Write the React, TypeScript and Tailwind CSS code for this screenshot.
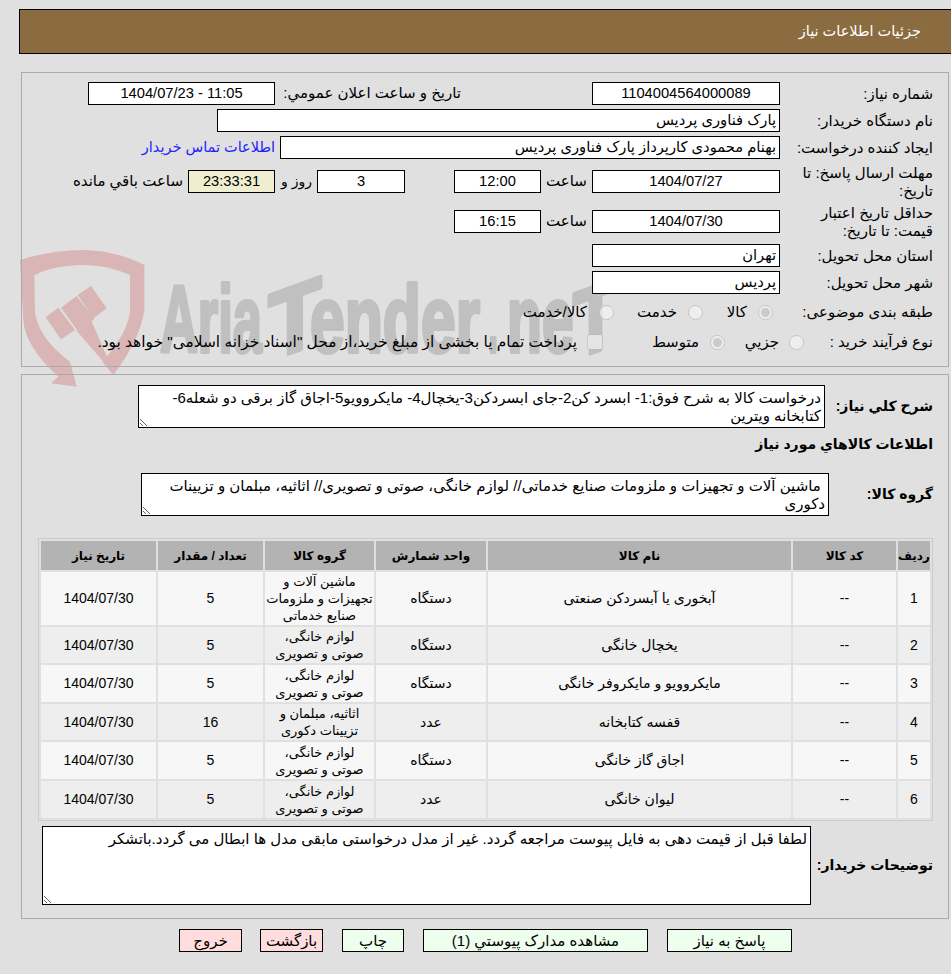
import React from 'react';

const inputBox = 'h-[23px] border border-black bg-white text-[14.7px] leading-[21px] px-[3px] overflow-hidden whitespace-nowrap';
const areaBox = 'h-[43px] border border-black bg-white resize text-[15px] leading-[18px] px-[3px] pt-[3px] overflow-hidden';
const radio = 'w-[15px] h-[15px] m-0 shrink-0';

const Row = ({ label, children, className = '' }: { label: React.ReactNode; children?: React.ReactNode; className?: string }) => (
  <div className={`flex items-center ${className}`}>
    <div className="w-[153px] shrink-0 text-[15px] leading-[18px]">{label}</div>
    {children}
  </div>
);

const homeGroup = 'لوازم خانگی،\nصوتی و تصویری';

const items = [
  { id: 1, name: 'آبخوری یا آبسردکن صنعتی', unit: 'دستگاه', group: 'ماشین آلات و\nتجهیزات و ملزومات\nصنایع خدماتی', qty: 5, h: 'h-[53px]' },
  { id: 2, name: 'یخچال خانگی', unit: 'دستگاه', group: homeGroup, qty: 5, h: 'h-[36px]' },
  { id: 3, name: 'مایکروویو و مایکروفر خانگی', unit: 'دستگاه', group: homeGroup, qty: 5, h: 'h-[37px]' },
  { id: 4, name: 'قفسه کتابخانه', unit: 'عدد', group: 'اثاثیه، مبلمان و\nتزیینات دکوری', qty: 16, h: 'h-[36px]' },
  { id: 5, name: 'اجاق گاز خانگی', unit: 'دستگاه', group: homeGroup, qty: 5, h: 'h-[37px]' },
  { id: 6, name: 'لیوان خانگی', unit: 'عدد', group: homeGroup, qty: 5, h: 'h-[37px]' },
];

const heads = [
  { t: 'ردیف', w: 'w-[32px]' },
  { t: 'کد کالا', w: 'w-[103px]' },
  { t: 'نام کالا', w: 'w-[303px]' },
  { t: 'واحد شمارش', w: 'w-[110px]' },
  { t: 'گروه کالا', w: 'w-[109px]' },
  { t: 'تعداد / مقدار', w: 'w-[105px]' },
  { t: 'تاریخ نیاز', w: 'w-[115px]' },
];

const Logo = () => (
  <svg className="absolute left-[15px] top-[240px]" width="620" height="170" viewBox="0 0 1860 510">
    <g fill="#d9b5b5">
      {/* shield band, ends in the arrow on the left */}
      <path d="M15 60 Q110 30 200 30 Q300 30 388 75 L388 210 Q375 300 295 405 L262 365 Q335 285 345 215 L345 105 Q270 72 200 75 Q120 75 58 105 L60 220 Q75 300 165 365 L185 440 L108 430 L130 410 Q30 320 25 240 Z" />
      <polygon points="92,232 130,203 180,270 138,298" />
      <polygon points="138,203 185,168 238,238 188,272" />
      <polygon points="188,165 228,138 275,205 235,235" />
      <polygon points="185,272 228,240 300,405 265,365" />
    </g>
    <g direction="ltr" textAnchor="start" fill="#c0c0c0" stroke="#c0c0c0" strokeWidth="12" strokeLinejoin="round" fontFamily="'Liberation Sans', sans-serif" fontWeight="700">
      <text x="435" y="335" fontSize="285" textLength="306" lengthAdjust="spacingAndGlyphs">Aria</text>
      <text x="-80" y="0" transform="translate(840 335) skewY(-20)" fontSize="285" textLength="160" lengthAdjust="spacingAndGlyphs">T</text>
      <text x="885" y="335" fontSize="285" textLength="510" lengthAdjust="spacingAndGlyphs">ender</text>
      <text x="1420" y="335" fontSize="285" textLength="30" lengthAdjust="spacingAndGlyphs">.</text>
      <text x="1476" y="335" fontSize="285" textLength="200" lengthAdjust="spacingAndGlyphs">ne</text>
      <text x="-67" y="0" transform="translate(1741 335) skewY(-20)" fontSize="285" textLength="135" lengthAdjust="spacingAndGlyphs">T</text>
    </g>
  </svg>
);

export default function App() {
  return (
    <div dir="rtl" className="relative w-[951px] h-[974px] overflow-hidden bg-[#e0e0e0] text-black font-['Liberation_Sans','DejaVu_Sans',sans-serif] text-[15px]">
      <Logo />
      <div className="absolute top-[9px] left-[19px] right-[-2px] h-[45px] bg-[#8b6b40] border border-black flex items-center pr-[31px] text-white text-[14.5px]">
        جزئیات اطلاعات نیاز
      </div>

      <div className="relative pt-[72px] pl-[21px] pr-[2px]">
        <div className="h-[295px] border border-[#aaa] pr-[15px] pt-[9px] flex flex-col">
          <Row label="شماره نیاز:">
            <div className={`${inputBox} w-[188px] text-center`}>1104004564000089</div>
            <div className="mr-[131px] w-[186px] whitespace-nowrap">تاریخ و ساعت اعلان عمومي:</div>
            <div className={`${inputBox} w-[187px] text-center`} dir="ltr">1404/07/23 - 11:05</div>
          </Row>
          <Row label="نام دستگاه خریدار:" className="mt-[4px]">
            <div className={`${inputBox} w-[563px]`}>پارک فناوری پردیس</div>
          </Row>
          <Row label="ایجاد کننده درخواست:" className="mt-[4px]">
            <div className={`${inputBox} w-[500px]`}>بهنام محمودی کارپرداز پارک فناوری پردیس</div>
            <a className="mr-[5px] text-[14.5px] text-[#2020ff]">اطلاعات تماس خریدار</a>
          </Row>
          <Row label="مهلت ارسال پاسخ: تا تاریخ:" className="mt-[4px] h-[37px]">
            <div className={`${inputBox} w-[188px] text-center h-[22px]`}>1404/07/27</div>
            <div className="w-[51px] text-center">ساعت</div>
            <div className={`${inputBox} w-[87px] text-center h-[22px]`}>12:00</div>
            <div className="w-[49px]" />
            <div className={`${inputBox} w-[88px] text-center h-[22px]`}>3</div>
            <div className="w-[42px] pr-[5px] whitespace-nowrap text-[14px]">روز و</div>
            <div className={`${inputBox} w-[87px] text-center h-[22px] !bg-[#efefd0]`}>23:33:31</div>
            <div className="mr-[5px] whitespace-nowrap">ساعت باقي مانده</div>
          </Row>
          <Row label="حداقل تاریخ اعتبار قیمت: تا تاریخ:" className="mt-[3px] h-[37px]">
            <div className={`${inputBox} w-[188px] text-center`}>1404/07/30</div>
            <div className="w-[51px] text-center">ساعت</div>
            <div className={`${inputBox} w-[87px] text-center`}>16:15</div>
          </Row>
          <Row label="استان محل تحویل:" className="mt-[4px]">
            <div className={`${inputBox} w-[188px]`}>تهران</div>
          </Row>
          <Row label="شهر محل تحویل:" className="mt-[4px]">
            <div className={`${inputBox} w-[188px]`}>پردیس</div>
          </Row>
          <Row label="طبقه بندی موضوعی:" className="mt-[6px] h-[24px]">
            <input type="radio" disabled defaultChecked className={`${radio} mr-[7px] ml-[11px]`} />
            <span className="w-[44px]">کالا</span>
            <input type="radio" disabled className={`${radio} ml-[11px]`} />
            <span className="w-[63px]">خدمت</span>
            <input type="radio" disabled className={`${radio} ml-[12px]`} />
            <span>کالا/خدمت</span>
          </Row>
          <Row label="نوع فرآیند خرید :" className="mt-[6px] h-[24px]">
            <input type="radio" disabled className={`${radio} mr-[-24px] ml-[10px]`} />
            <span className="w-[54px]">جزیي</span>
            <input type="radio" disabled defaultChecked className={`${radio} ml-[11px]`} />
            <span className="w-[96px]">متوسط</span>
            <input type="checkbox" disabled className="w-[16px] h-[16px] m-0 ml-[10px] shrink-0" />
            <span className="whitespace-nowrap text-[15.4px]">پرداخت تمام یا بخشی از مبلغ خرید،از محل "اسناد خزانه اسلامی" خواهد بود.</span>
          </Row>
        </div>

        <div className="mt-[7px] h-[545px] border border-[#aaa] pr-[15px] pt-[10px]">
          <div className="flex items-center">
            <div className="w-[108px] font-bold text-[14px]">شرح کلي نیاز:</div>
            <textarea readOnly className={`${areaBox} w-[687px]`} defaultValue="درخواست کالا به شرح فوق:1- ابسرد کن2-جای ابسردکن3-یخچال4- مایکروویو5-اجاق گاز برقی دو شعله6-کتابخانه ویترین" />
          </div>
          <div className="font-bold text-[14px] mt-[6px]">اطلاعات کالاهاي مورد نیاز</div>
          <div className="flex items-center mt-[18px]">
            <div className="w-[104px] font-bold text-[14px]">گروه کالا:</div>
            <textarea readOnly className={`${areaBox} w-[688px]`} defaultValue=" ماشین آلات و تجهیزات و ملزومات صنایع خدماتی// لوازم خانگی، صوتی و تصویری// اثاثیه، مبلمان و تزیینات دکوری" />
          </div>
          <table className="mt-[22px] w-[894px] border-separate border-spacing-[2px] border border-[#ccc] table-fixed text-[14px]">
            <thead>
              <tr className="h-[29px] bg-[#b3b3b3] text-[12px] font-bold">
                {heads.map((h) => <th key={h.t} className={`font-bold p-0 ${h.w}`}>{h.t}</th>)}
              </tr>
            </thead>
            <tbody>
              {items.map((r, i) => (
                <tr key={r.id} className={`${r.h} ${i % 2 === 0 ? 'bg-[#f7f7f7]' : 'bg-[#eeeeee]'} text-center leading-[17px]`}>
                  <td className="p-0">{r.id}</td>
                  <td className="p-0">--</td>
                  <td className="p-0">{r.name}</td>
                  <td className="p-0">{r.unit}</td>
                  <td className="p-0 text-[13px] whitespace-pre-line">{r.group}</td>
                  <td className="p-0">{r.qty}</td>
                  <td className="p-0">1404/07/30</td>
                </tr>
              ))}
            </tbody>
          </table>
          <div className="flex items-center mt-[5px]">
            <div className="w-[122px] font-bold text-[14px] whitespace-nowrap">توضیحات خریدار:</div>
            <textarea readOnly className={`${areaBox} w-[769px] !h-[79px]`} defaultValue="لطفا قبل از قیمت دهی به فایل پیوست مراجعه گردد. غیر از مدل درخواستی مابقی مدل ها ابطال می گردد.باتشکر" />
          </div>
        </div>

        <div className="flex mt-[10px] mr-[157px] gap-[19px]">
          <button className="w-[125px] h-[23px] border border-black bg-[#eeffee] text-[15px]">پاسخ به نیاز</button>
          <button className="w-[225px] h-[23px] border border-black bg-[#eeffee] text-[15px]">مشاهده مدارک پیوستي (1)</button>
          <button className="w-[62px] h-[23px] border border-black bg-[#eeffee] text-[15px]">چاپ</button>
          <button className="w-[63px] h-[23px] border border-black bg-[#ffdddd] text-[15px]">بازگشت</button>
          <button className="w-[63px] h-[23px] border border-black bg-[#ffdddd] text-[15px] mr-[-1px]">خروج</button>
        </div>
      </div>
    </div>
  );
}
